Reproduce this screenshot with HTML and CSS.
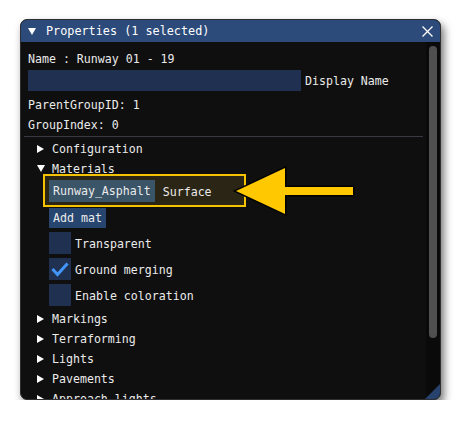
FILE: index.html
```html
<!DOCTYPE html>
<html>
<head>
<meta charset="utf-8">
<link rel="stylesheet" href="styles.css">
</head>
<body>
<div class="desk">
  <div class="window">
    <div class="titlebar">
      <span class="tri-down tri-title"></span>
      <span class="title">Properties (1 selected)</span>
      <svg class="close" width="11" height="11" viewBox="0 0 11 11"><path d="M0.5 0.5L10.5 10.5M10.5 0.5L0.5 10.5" stroke="#ffffff" stroke-width="1.3"/></svg>
    </div>
    <div class="main">
      <div class="content">
        <div class="row first">Name : Runway 01 - 19</div>
        <div class="inputrow"><div class="input"></div><span class="inlabel">Display Name</span></div>
        <div class="row gap3">ParentGroupID: 1</div>
        <div class="row">GroupIndex: 0</div>
        <div class="sep"></div>
        <div class="row node"><span class="arrowbox"><span class="tri-right"></span></span><span class="lbl">Configuration</span></div>
        <div class="row node"><span class="arrowbox"><span class="tri-down"></span></span><span class="lbl">Materials</span></div>
        <div class="highlight">
          <span class="matbtn">Runway_Asphalt</span><span class="matlabel">Surface</span>
        </div>
        <div class="addmat">Add mat</div>
        <div class="checkrow"><span class="check"></span><span class="lbl">Transparent</span></div>
        <div class="checkrow"><span class="check"><svg width="22" height="22" viewBox="0 0 22 22"><path d="M3.5 11L8.5 16.5L18.5 5.5" fill="none" stroke="#4296fa" stroke-width="3"/></svg></span><span class="lbl">Ground merging</span></div>
        <div class="checkrow"><span class="check"></span><span class="lbl">Enable coloration</span></div>
        <div class="row node gap2"><span class="arrowbox"><span class="tri-right"></span></span><span class="lbl">Markings</span></div>
        <div class="row node"><span class="arrowbox"><span class="tri-right"></span></span><span class="lbl">Terraforming</span></div>
        <div class="row node"><span class="arrowbox"><span class="tri-right"></span></span><span class="lbl">Lights</span></div>
        <div class="row node"><span class="arrowbox"><span class="tri-right"></span></span><span class="lbl">Pavements</span></div>
        <div class="row node"><span class="arrowbox"><span class="tri-right"></span></span><span class="lbl">Approach lights</span></div>
      </div>
      <div class="scrollbar"><div class="thumb"></div></div>
    </div>
    <div class="grip"></div>
    <svg class="callout" width="421" height="381" viewBox="20 19 421 381">
      <polygon points="236,191 285,168 285,187 353,187 353,195 285,195 285,214" fill="#ffc800" stroke="#000000" stroke-width="3" stroke-linejoin="miter" paint-order="stroke"/>
    </svg>
  </div>
</div>
</body>
</html>
```
FILE: styles.css
```css
html, body {
  margin: 0;
  padding: 0;
  background: #ffffff;
}
.desk {
  padding: 19px 0 0 20px;
}
.window {
  position: relative;
  width: 421px;
  height: 381px;
  box-sizing: border-box;
  background: #0f0f0f;
  border: 1px solid #2e2e33;
  border-radius: 7px;
  overflow: hidden;
  box-shadow: 3px 5px 9px rgba(0, 0, 0, 0.55);
  font-family: "DejaVu Sans Mono", monospace;
  font-size: 11.6px;
  color: #ebebeb;
  display: flex;
  flex-direction: column;
}
.titlebar {
  height: 22px;
  flex: none;
  background: #2c4a7a;
  display: flex;
  align-items: center;
  padding-left: 7px;
  margin: -1px -1px 0 -1px;
  padding-top: 1px;
  color: #ffffff;
}
.tri-title {
  margin-left: 1px;
  margin-right: 10px;
}
.title {
  flex: 1;
  font-size: 11.8px;
}
.close {
  margin-right: 8px;
}
.main {
  flex: 1;
  display: flex;
  min-height: 0;
}
.content {
  flex: 1;
  padding-left: 7px;
  overflow: hidden;
  display: flex;
  flex-direction: column;
}
.row {
  height: 20px;
  line-height: 22px;
  flex: none;
  white-space: nowrap;
}
.first {
  margin-top: 6px;
}
.gap3 {
  margin-top: 3px;
}
.gap2 {
  margin-top: 2px;
}
.inputrow {
  margin-top: 2px;
  height: 21px;
  display: flex;
  align-items: center;
  flex: none;
}
.input {
  width: 273px;
  height: 21px;
  background: #1f3050;
}
.inlabel {
  margin-left: 4px;
  padding-top: 1px;
}
.sep {
  height: 1px;
  background: #3a3a42;
  margin: 2px 3px 1px -4px;
  flex: none;
}
.node {
  display: flex;
  align-items: center;
}
.lbl {
  padding-top: 2px;
}
.arrowbox {
  width: 15px;
  margin-left: 9px;
  display: flex;
  align-items: center;
  padding-top: 1px;
}
.tri-right {
  width: 0;
  height: 0;
  border-top: 4px solid transparent;
  border-bottom: 4px solid transparent;
  border-left: 7px solid #ffffff;
}
.tri-down {
  width: 0;
  height: 0;
  border-left: 4px solid transparent;
  border-right: 4px solid transparent;
  border-top: 7px solid #ffffff;
}
.highlight {
  margin-top: -4px;
  margin-left: 15px;
  width: 203px;
  height: 33px;
  box-sizing: border-box;
  border: 2px solid #f4c200;
  background: #2a2514;
  padding: 4px 4px 3px 4px;
  display: flex;
  align-items: center;
  flex: none;
}
.matbtn {
  height: 22px;
  line-height: 23px;
  padding: 0 4px;
  background: #3a5468;
  white-space: nowrap;
}
.matlabel {
  margin-left: 8px;
  padding-top: 1px;
}
.addmat {
  margin-top: 1px;
  margin-left: 21px;
  width: 57px;
  height: 20px;
  line-height: 21px;
  box-sizing: border-box;
  padding-left: 4px;
  background: #26466f;
  white-space: nowrap;
  flex: none;
}
.checkrow {
  margin-top: 4px;
  margin-left: 21px;
  height: 22px;
  display: flex;
  align-items: center;
  flex: none;
}
.check {
  width: 22px;
  height: 22px;
  background: #1f3050;
  margin-right: 4px;
  display: block;
}
.check svg {
  display: block;
}
.scrollbar {
  width: 14px;
  flex: none;
  background: #0a0a0a;
  padding: 4px 3px 0 3px;
  box-sizing: border-box;
}
.thumb {
  height: 292px;
  background: #4f4f4f;
  border-radius: 4px;
}
.grip {
  position: absolute;
  right: 0;
  bottom: 0;
  width: 0;
  height: 0;
  border-left: 15px solid transparent;
  border-bottom: 15px solid #27436d;
}
.callout {
  position: absolute;
  left: -1px;
  top: -1px;
  pointer-events: none;
}
```
